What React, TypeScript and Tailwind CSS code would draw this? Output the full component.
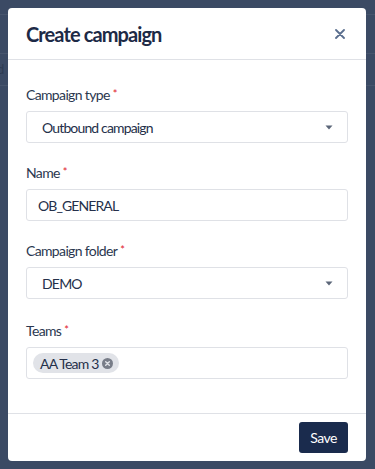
import React from "react";

function Label({ text }: { text: string }) {
  return (
    <div className="h-5 flex items-center text-[14px] text-[#2b3850] leading-5 tracking-[-0.65px]">
      <span>{text}</span>
      <span className="text-[#e0202a] text-[11px] ml-[3px] -mt-[3px]">*</span>
    </div>
  );
}

function Caret() {
  return (
    <svg width="8" height="5" viewBox="0 0 8 5" className="mr-[3px]">
      <path d="M0.5 0.5 H7.5 L4 4.5 Z" fill="#5b6678" />
    </svg>
  );
}

export default function App() {
  return (
    <div
      className="relative w-[375px] h-[469px] overflow-hidden bg-[#3b4a64]"
      style={{ fontFamily: "Lato, 'Open Sans', sans-serif" }}
    >
      {/* background page content */}
      <div className="flex flex-col">
        <div className="h-[15px] border-b border-[#47556d]" />
        <div className="h-[39px] border-b border-[#47556d]" />
        <div className="h-[32px] border-b border-[#47556d] flex items-center text-[13px] text-[#2d3b52] -ml-[3px]">
          d
        </div>
      </div>

      {/* modal */}
      <div className="absolute left-2 top-2 w-[358px] h-[453px] bg-white rounded-[4px] flex flex-col">
        <div className="h-[52px] flex items-center justify-between px-[18px] border-b border-[#dfe1e6]">
          <h1 className="text-[20px] font-bold text-[#1d2a46] tracking-[-0.9px]">Create campaign</h1>
          <svg width="10" height="10" viewBox="0 0 10 10" className="mr-[3px]">
            <path d="M1 1 L9 9 M9 1 L1 9" stroke="#5a6e8e" strokeWidth="1.8" strokeLinecap="round" />
          </svg>
        </div>

        <div className="flex flex-col gap-5 px-[18px] pt-[25px] pb-[34px]">
          <div className="flex flex-col gap-[6px]">
            <Label text="Campaign type" />
            <div className="h-8 border border-[#dfe1e6] rounded-[3px] flex items-center justify-between pl-[15px] pr-[11px] text-[14px] text-[#25304a] tracking-[-0.85px]">
              <span>Outbound campaign</span>
              <Caret />
            </div>
          </div>
          <div className="flex flex-col gap-[6px]">
            <Label text="Name" />
            <div className="h-8 border border-[#dfe1e6] rounded-[3px] flex items-center pl-[11px] text-[14px] text-[#25304a] tracking-[-0.9px]">
              <span>OB_GENERAL</span>
            </div>
          </div>
          <div className="flex flex-col gap-[6px]">
            <Label text="Campaign folder" />
            <div className="h-8 border border-[#dfe1e6] rounded-[3px] flex items-center justify-between pl-[15px] pr-[11px] text-[14px] text-[#25304a] tracking-[-0.8px]">
              <span>DEMO</span>
              <Caret />
            </div>
          </div>
          <div className="flex flex-col gap-[6px] mt-[2px]">
            <Label text="Teams" />
            <div className="h-8 border border-[#dfe1e6] rounded-[3px] flex items-center pl-[6px]">
              <div className="h-5 rounded-full bg-[#e1e3e8] flex items-center gap-[3px] pl-[7px] pr-[6px] text-[14px] text-[#25304a] tracking-[-0.8px]">
                <span>AA Team 3</span>
                <svg width="11" height="11" viewBox="0 0 11 11">
                  <circle cx="5.5" cy="5.5" r="5.5" fill="#787d88" />
                  <path d="M3.7 3.7 L7.3 7.3 M7.3 3.7 L3.7 7.3" stroke="#e1e3e8" strokeWidth="1.4" strokeLinecap="round" />
                </svg>
              </div>
            </div>
          </div>
        </div>

        <div className="border-t border-[#dfe1e6] flex justify-end px-[18px] pt-2">
          <button className="h-[31px] px-[11px] rounded-[3px] bg-[#1a2b4d] text-white text-[14px] tracking-[-0.5px]">
            Save
          </button>
        </div>
      </div>
    </div>
  );
}
